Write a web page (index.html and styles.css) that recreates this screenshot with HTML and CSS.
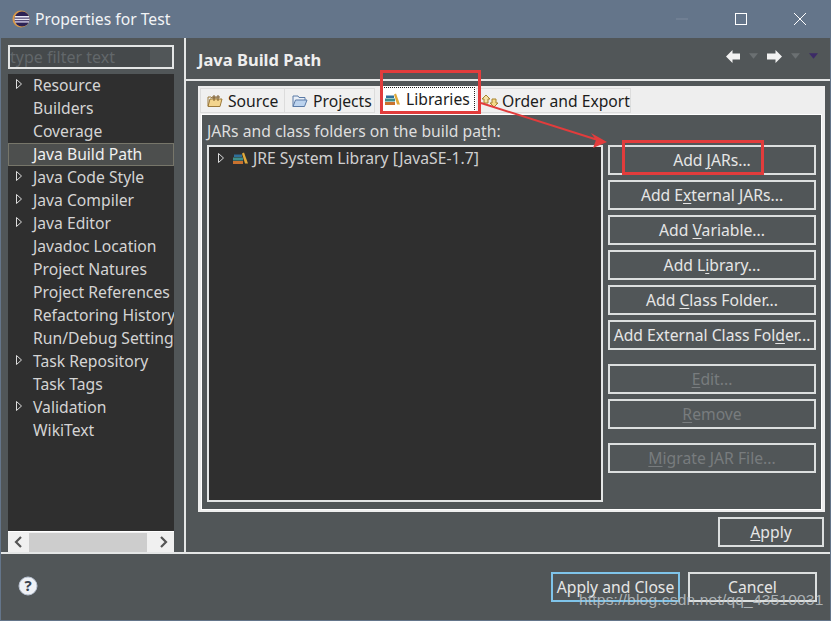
FILE: index.html
```html
<!DOCTYPE html>
<html lang="en">
<head>
<meta charset="utf-8">
<title>Properties for Test</title>
<link rel="stylesheet" href="styles.css">
</head>
<body>
<div class="window">
  <header class="titlebar">
    <svg class="app-icon" width="18" height="18" viewBox="0 0 18 18"><circle cx="9" cy="9" r="8.500" fill="#d89a4a"/><circle cx="10" cy="9" r="7.500" fill="#2c2255"/><rect x="3" y="6" width="14" height="1.600" fill="#e8e6f2"/><rect x="2.500" y="8.600" width="15" height="1.600" fill="#e8e6f2"/><rect x="3" y="11.200" width="14" height="1.400" fill="#cfcbe4"/></svg>
    <span class="title">Properties for Test</span>
    <div class="win-controls">
      <svg width="14" height="14" viewBox="0 0 14 14"><path d="M1 7h12" stroke="#7c8a9c" stroke-width="1"/></svg>
      <svg width="14" height="14" viewBox="0 0 14 14"><rect x="1.500" y="1.500" width="11" height="11" fill="none" stroke="#fff" stroke-width="1"/></svg>
      <svg width="14" height="14" viewBox="0 0 14 14"><path d="M1 1l12 12M13 1L1 13" stroke="#fff" stroke-width="1" fill="none"/></svg>
    </div>
  </header>
  <div class="main">
    <aside class="sidebar">
      <div class="filter"><span class="filter-fill"></span><span class="filter-text">type filter text</span></div>
      <div class="tree">
        <ul class="tree-list">
          <li class="node"><svg class="expander" width="6" height="10" viewBox="0 0 6 10"><path d="M.5.500l5 4.500-5 4.500z" fill="none" stroke="#ddd"/></svg>Resource</li>
          <li class="node">Builders</li>
          <li class="node">Coverage</li>
          <li class="node selected">Java Build Path</li>
          <li class="node"><svg class="expander" width="6" height="10" viewBox="0 0 6 10"><path d="M.5.500l5 4.500-5 4.500z" fill="none" stroke="#ddd"/></svg>Java Code Style</li>
          <li class="node"><svg class="expander" width="6" height="10" viewBox="0 0 6 10"><path d="M.5.500l5 4.500-5 4.500z" fill="none" stroke="#ddd"/></svg>Java Compiler</li>
          <li class="node"><svg class="expander" width="6" height="10" viewBox="0 0 6 10"><path d="M.5.500l5 4.500-5 4.500z" fill="none" stroke="#ddd"/></svg>Java Editor</li>
          <li class="node">Javadoc Location</li>
          <li class="node">Project Natures</li>
          <li class="node">Project References</li>
          <li class="node">Refactoring History</li>
          <li class="node">Run/Debug Settings</li>
          <li class="node"><svg class="expander" width="6" height="10" viewBox="0 0 6 10"><path d="M.5.500l5 4.500-5 4.500z" fill="none" stroke="#ddd"/></svg>Task Repository</li>
          <li class="node">Task Tags</li>
          <li class="node"><svg class="expander" width="6" height="10" viewBox="0 0 6 10"><path d="M.5.500l5 4.500-5 4.500z" fill="none" stroke="#ddd"/></svg>Validation</li>
          <li class="node">WikiText</li>
        </ul>
        <div class="hscroll">
          <svg class="sb-arrow" width="21" height="20" viewBox="0 0 21 20"><path d="M13 5l-5 5 5 5" fill="none" stroke="#555" stroke-width="2.200"/></svg>
          <span class="sb-thumb"></span>
          <svg class="sb-arrow" width="27" height="20" viewBox="0 0 27 20"><path d="M14 5l5 5-5 5" fill="none" stroke="#555" stroke-width="2.200"/></svg>
        </div>
      </div>
    </aside>
    <section class="page">
      <div class="page-head">
        <h1 class="page-title">Java Build Path</h1>
        <div class="nav-icons">
          <svg width="14" height="13" viewBox="0 0 14 13"><path d="M0 6.500L6.500 0v3.500H14v6H6.500V13z" fill="#f2f2f2"/></svg>
          <svg width="9" height="6" viewBox="0 0 10 6"><path d="M0 0h10L5 6z" fill="#6b7072"/></svg>
          <svg width="15" height="13" viewBox="0 0 15 13"><path d="M15 6.500L8.500 0v3.500H0v6h8.500V13z" fill="#f2f2f2"/></svg>
          <svg width="9" height="6" viewBox="0 0 10 6"><path d="M0 0h10L5 6z" fill="#6b7072"/></svg>
          <svg width="9" height="6" viewBox="0 0 10 6"><path d="M0 0h10L5 6z" fill="#3c2a66"/></svg>
        </div>
      </div>
      <div class="page-body">
        <div class="tabfolder">
          <div class="tabs">
            <div class="tab tab-source">
              <svg width="16" height="14" viewBox="0 0 16 14"><path d="M1 12.500L3 5h12l-2 7.500z" fill="#f3d48d" stroke="#9c7a3c"/><path d="M1 12V3h3l1 1h5" fill="none" stroke="#9c7a3c"/><path d="M7 1v6M11 1v6M5 3h8" stroke="#7a5a2c" fill="none"/></svg>
              <span>Source</span>
            </div>
            <div class="tab tab-projects">
              <svg width="16" height="14" viewBox="0 0 16 14"><path d="M1 12.500V2h5l1 1.500h6V6" fill="#e9eff7" stroke="#5a7aa6"/><path d="M1 12.500L3.500 6H15l-2.500 6.500z" fill="#bcd3ee" stroke="#5a7aa6"/></svg>
              <span>Projects</span>
            </div>
            <div class="tab tab-libs">
              <svg width="15" height="12" viewBox="0 0 15 12"><rect x="0" y="9" width="10" height="3" fill="#c9722f"/><rect x="0" y="5.500" width="10" height="3" fill="#3e8f8a"/><rect x="1" y="2.500" width="8" height="2.500" fill="#2f6f9a"/><path d="M9 1.500l2-1 4 11h-3z" fill="#e0a93a"/></svg>
              <span>Libraries</span>
            </div>
            <div class="tab tab-order">
              <svg width="18" height="14" viewBox="0 0 18 14"><path d="M5 1l4 4H7v4H3V5H1z" fill="#f4e3a6" stroke="#a8842f"/><path d="M13 13l4-4h-2V5h-4v4H9z" fill="#f4d98a" stroke="#a8842f"/></svg>
              <span>Order and Export</span>
            </div>
          </div>
          <div class="tab-content">
            <div class="list-col">
              <label class="list-label">JARs and class folders on the build pa<u>t</u>h:</label>
              <div class="lib-list">
                <div class="lib-row">
                  <svg class="twisty" width="6" height="10" viewBox="0 0 6 10"><path d="M.5.500l5 4.500-5 4.500z" fill="none" stroke="#ddd"/></svg>
                  <svg width="15" height="12" viewBox="0 0 15 12"><rect x="0" y="9" width="10" height="3" fill="#c9722f"/><rect x="0" y="5.500" width="10" height="3" fill="#3e8f8a"/><rect x="1" y="2.500" width="8" height="2.500" fill="#2f6f9a"/><path d="M9 1.500l2-1 4 11h-3z" fill="#e0a93a"/></svg>
                  <span>JRE System Library [JavaSE-1.7]</span>
                </div>
              </div>
            </div>
            <div class="btn-col">
              <button class="btn">Add <u>J</u>ARs...</button>
              <button class="btn">Add E<u>x</u>ternal JARs...</button>
              <button class="btn">Add <u>V</u>ariable...</button>
              <button class="btn">Add L<u>i</u>brary...</button>
              <button class="btn">Add <u>C</u>lass Folder...</button>
              <button class="btn">Add External Class Fol<u>d</u>er...</button>
              <button class="btn off gap-top"><u>E</u>dit...</button>
              <button class="btn off"><u>R</u>emove</button>
              <button class="btn off gap-top"><u>M</u>igrate JAR File...</button>
            </div>
          </div>
        </div>
        <div class="apply-row"><button class="btn apply"><u>A</u>pply</button></div>
      </div>
    </section>
  </div>
  <footer class="footer">
    <svg class="help" width="20" height="20" viewBox="0 0 20 20"><circle cx="10" cy="10" r="9" fill="#eef1f6" stroke="#b8c2d2"/><text class="help-q" x="10" y="15" text-anchor="middle">?</text></svg>
    <div class="footer-btns">
      <button class="btn footer-btn default">Apply and Close</button>
      <button class="btn footer-btn">Cancel</button>
    </div>
  </footer>

  <span class="mark mark-libs"></span>
  <span class="mark mark-jars"></span>
  <svg class="arrow" width="140" height="50" viewBox="0 0 140 50"><path d="M2 3L122 41" stroke="#e23c3c" stroke-width="2"/><path d="M128 42l-14 6 3-8-5-7z" fill="#e23c3c"/></svg>
  <span class="watermark">https://blog.csdn.net/qq_43510031</span>
</div>
</body>
</html>
```
FILE: styles.css
```css
* { box-sizing: border-box; }
html, body { margin: 0; padding: 0; }
body { width: 831px; height: 621px; overflow: hidden; font-family: "Noto Sans", "Open Sans", sans-serif; font-size: 15.7px; color: #e6e6e6; }
u { text-underline-offset: 2px; text-decoration-thickness: 1px; }
ul { list-style: none; margin: 0; padding: 0; }

.window { position: relative; width: 831px; height: 621px; background: #515658; border: solid #64758a; border-width: 0 1px 1px 1px; display: flex; flex-direction: column; }

.titlebar { height: 38px; flex: none; background: #64758a; display: flex; align-items: center; padding-left: 11px; }
.app-icon { flex: none; }
.title { margin-left: 5px; font-size: 15.7px; color: #f2f4f6; }
.win-controls { margin-left: auto; display: flex; align-items: center; gap: 45px; padding-right: 23px; }

.main { height: 516px; flex: none; display: flex; border-bottom: 2px solid #e4e6e6; }
.sidebar { width: 185px; flex: none; border-right: 2px solid #e4e6e6; padding: 7px 10px 0 7px; display: flex; flex-direction: column; }
.filter { position: relative; height: 24px; flex: none; border: 2px solid #e4e6e6; background: #515658; display: flex; }
.filter-fill { width: 140px; background: #45494b; }
.filter-text { position: absolute; left: 0; top: -1px; font-size: 16px; color: #62676a; }
.tree { margin-top: 5px; flex: 1; background: #2f2f2f; display: flex; flex-direction: column; min-height: 0; }
.tree-list { flex: 1; overflow: hidden; }
.node { position: relative; height: 23px; line-height: 23px; padding-left: 25px; white-space: nowrap; color: #d4d4d4; overflow: hidden; }
.node.selected { background: #4d4f4e; box-shadow: inset 0 0 0 1px #77766a; color: #f0f0f0; }
.expander { position: absolute; left: 8px; top: 5px; }
.hscroll { height: 21px; flex: none; background: #f0f0f0; display: flex; align-items: center; border-top: 1px solid #fff; }
.sb-arrow { flex: none; }
.sb-thumb { flex: 1; height: 19px; background: #cdcdcd; }

.page { flex: 1; min-width: 0; display: flex; flex-direction: column; }
.page-head { height: 43px; flex: none; display: flex; align-items: center; justify-content: space-between; border-bottom: 2px solid #e4e6e6; padding: 2px 12px 0 12px; }
.page-title { margin: 0; font-size: 16.5px; font-weight: 700; color: #eee; }
.nav-icons { display: flex; align-items: center; gap: 9px; padding-bottom: 7px; }
.page-body { flex: 1; padding: 5px 5px 0 12px; display: flex; flex-direction: column; }

.tabfolder { height: 426px; flex: none; background: #eeeeee; padding: 0 3px 2px 3px; display: flex; flex-direction: column; }
.tabs { height: 28px; flex: none; display: flex; align-items: flex-end; margin-left: -1px; padding-bottom: 1px; }
.tab { height: 25px; display: flex; align-items: center; gap: 5px; background: #f0f0f0; color: #1c1c1c; border: 1px solid #dcdcdc; padding-left: 6px; }
.tab-source { width: 85px; }
.tab-projects { width: 90px; border-left: 0; padding-left: 7px; }
.tab-libs { width: 96px; height: 27px; margin-left: 5px; padding-left: 5px; padding-bottom: 2px; gap: 6px; background: #fff; border: 0; outline: 1px dotted #222; outline-offset: -2px; }
.tab-order { width: 155px; padding-left: 5px; gap: 3px; border-left: 0; }
.tab-content { flex: 1; min-height: 0; background: #515658; border: 1px solid #fff; display: flex; padding: 6px 5px 7px 5px; }
.list-col { width: 396px; flex: none; display: flex; flex-direction: column; }
.list-label { height: 24px; flex: none; line-height: 20px; color: #dedede; white-space: nowrap; }
.lib-list { flex: 1; border: 2px solid #e4e6e6; background: #2f2f2f; }
.lib-row { height: 22px; display: flex; align-items: center; padding-left: 9px; color: #cfcfcf; }
.twisty { margin-right: 9px; }
.lib-row span { margin-left: 5px; }
.btn-col { width: 208px; flex: none; margin-left: 5px; padding-top: 24px; display: flex; flex-direction: column; gap: 5px; }

.btn { height: 30px; flex: none; width: 100%; padding: 0; background: #515658; border: 2px solid #dcdfdf; color: #e6e6e6; font: 15.7px "Noto Sans", "Open Sans", sans-serif; white-space: nowrap; }
.btn.off { color: #787c7e; }
.btn.gap-top { margin-top: 9px; }

.apply-row { display: flex; justify-content: flex-end; padding: 5px 1px 0 0; }
.btn.apply { width: 106px; }

.footer { flex: 1; position: relative; display: flex; align-items: flex-start; padding: 18px 0 0 17px; }
.help { flex: none; margin-top: 4px; }
.help-q { font: 700 15px "Noto Sans", sans-serif; fill: #3c4450; }
.footer-btns { margin-left: auto; display: flex; gap: 8px; padding-right: 13px; }
.footer-btn { width: 129px; }
.footer-btn.default { border-color: #7fc4ea; }

.mark { position: absolute; border: 3px solid #e23c3c; pointer-events: none; }
.mark-libs { left: 379px; top: 70px; width: 101px; height: 44px; }
.mark-jars { left: 621px; top: 140px; width: 142px; height: 35px; }
.arrow { position: absolute; left: 478px; top: 100px; }
.watermark { position: absolute; left: 578px; top: 591px; font: 15.5px "Liberation Sans", Arial, sans-serif; color: rgba(190,195,198,.85); white-space: nowrap; letter-spacing: .2px; }
```
